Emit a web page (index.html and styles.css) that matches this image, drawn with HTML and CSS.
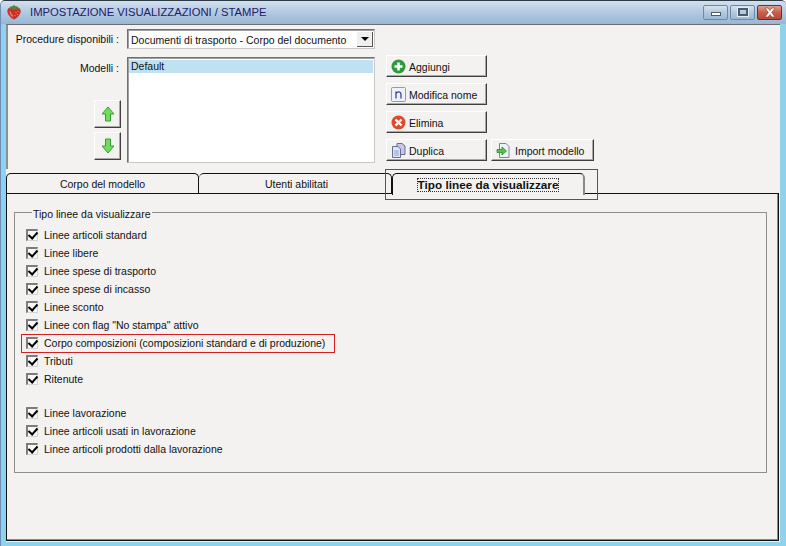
FILE: index.html
```html
<!DOCTYPE html>
<html lang="it">
<head>
<meta charset="utf-8">
<title>Impostazione visualizzazioni / stampe</title>
<link rel="stylesheet" href="styles.css">
</head>
<body>
<div class="window">
  <header class="titlebar">
    <svg class="app-icon" width="16" height="16" viewBox="0 0 16 16"><path d="M8 15.500 Q3 13 1.500 8.500 Q.8 5 3 4 L13 4 Q15.200 5 14.500 8.500 Q13 13 8 15.500 Z" fill="#c9302a"/><path d="M2.500 5 Q4.500 1.500 6 2.500 L8 1 L10 2.500 Q11.500 1.500 13.500 5 L10.500 4.500 L8 6 L5.500 4.500 Z" fill="#5d7f3a"/><path d="M4 7.500 Q4.500 10.500 7 12.500" stroke="#ee8176" stroke-width="1.500" fill="none"/><path d="M10 8 v.8 M12 7 v.8 M9 11 v.8 M11.500 10 v.8" stroke="#f3b43f"/></svg>
    <span class="title">IMPOSTAZIONE VISUALIZZAZIONI / STAMPE</span>
    <div class="caption-buttons">
      <span class="cap cap-min"><i class="glyph-min"></i></span>
      <span class="cap cap-max"><i class="glyph-max"></i></span>
      <span class="cap cap-close"><svg width="16" height="11" viewBox="0 0 16 11"><path d="M3 1 L6 1 L8 3.500 L10 1 L13 1 L9.700 5.500 L13 10 L10 10 L8 7.500 L6 10 L3 10 L6.300 5.500 Z" fill="#fff" stroke="#7c3a30" stroke-width=".6"/></svg></span>
    </div>
  </header>
  <main class="client">
    <section class="top">
      <div class="field-labels">
        <label class="lbl lbl-proc">Procedure disponibili :</label>
        <label class="lbl lbl-mod">Modelli :</label>
        <div class="move-buttons">
          <button class="btn btn-move"><svg width="14" height="16" viewBox="0 0 14 16"><path d="M7 1 L13 8 L9.500 8 L9.500 15 L4.500 15 L4.500 8 L1 8 Z" fill="#6fdc5a" stroke="#3c9a3a"/></svg></button>
          <button class="btn btn-move"><svg width="14" height="16" viewBox="0 0 14 16"><path d="M7 15 L13 8 L9.500 8 L9.500 1 L4.500 1 L4.500 8 L1 8 Z" fill="#6fdc5a" stroke="#3c9a3a"/></svg></button>
        </div>
      </div>
      <div class="fields">
        <div class="select"><span class="select-text">Documenti di trasporto - Corpo del documento</span><span class="select-arrow"></span></div>
        <div class="list"><div class="list-item">Default</div></div>
      </div>
      <div class="actions">
        <button class="btn btn-action"><svg width="15" height="15" viewBox="0 0 15 15"><circle cx="7.500" cy="7.500" r="7" fill="#2d9a3c"/><path d="M7.500 3.500 V11.500 M3.500 7.500 H11.500" stroke="#fff" stroke-width="2.600"/></svg>Aggiungi</button>
        <button class="btn btn-action"><svg width="15" height="15" viewBox="0 0 15 15"><rect x=".5" y=".5" width="14" height="14" rx="1" fill="#eef1fb" stroke="#8d97c9"/><path d="M5 4.500 V11.500 M5 6.500 Q6.500 4.500 8.500 5 Q10 5.500 10 7.500 V11.500" fill="none" stroke="#2a3a80" stroke-width="1.200"/></svg>Modifica nome</button>
        <button class="btn btn-action"><svg width="15" height="15" viewBox="0 0 15 15"><circle cx="7.500" cy="7.500" r="7" fill="#dd4a2c"/><path d="M4.500 4.500 L10.500 10.500 M10.500 4.500 L4.500 10.500" stroke="#fff" stroke-width="2.400"/></svg>Elimina</button>
        <div class="action-row">
          <button class="btn btn-action"><svg width="15" height="15" viewBox="0 0 15 15"><path d="M6 .5 H11 L14 3 V11.500 H6 Z" fill="#c9c6e6" stroke="#6d6a9a"/><path d="M1.500 3.500 H7 L9.500 6 V14.500 H1.500 Z" fill="#dfe6f5" stroke="#5f6f98"/><path d="M3 8 H8 M3 10 H8 M3 12 H8" stroke="#8ea0c6"/></svg>Duplica</button>
          <button class="btn btn-action btn-import"><svg width="15" height="15" viewBox="0 0 15 15"><path d="M3.500 .5 H10 L13 3.500 V14.500 H3.500 Z" fill="#eef2f8" stroke="#7b8799"/><path d="M1 6.500 H6 V4 L10.500 8 L6 12 V9.500 H1 Z" fill="#55c24a" stroke="#2b8a33" stroke-width=".8"/></svg>Import modello</button>
        </div>
      </div>
    </section>
    <nav class="tabs">
      <div class="tab tab-1">Corpo del modello</div>
      <div class="tab tab-2">Utenti abilitati</div>
      <div class="tab tab-3"><span class="focus">Tipo linee da visualizzare</span><span class="mark mark-tab"></span></div>
    </nav>
    <section class="panel">
      <fieldset class="group">
        <legend>Tipo linee da visualizzare</legend>
        <div class="checks">
          <div class="check"><span class="box"></span>Linee articoli standard</div>
          <div class="check"><span class="box"></span>Linee libere</div>
          <div class="check"><span class="box"></span>Linee spese di trasporto</div>
          <div class="check"><span class="box"></span>Linee spese di incasso</div>
          <div class="check"><span class="box"></span>Linee sconto</div>
          <div class="check"><span class="box"></span>Linee con flag "No stampa" attivo</div>
          <div class="check check-marked"><span class="box"></span>Corpo composizioni (composizioni standard e di produzione)<span class="mark mark-row"></span></div>
          <div class="check"><span class="box"></span>Tributi</div>
          <div class="check"><span class="box"></span>Ritenute</div>
          <div class="check check-gap"><span class="box"></span>Linee lavorazione</div>
          <div class="check"><span class="box"></span>Linee articoli usati in lavorazione</div>
          <div class="check"><span class="box"></span>Linee articoli prodotti dalla lavorazione</div>
        </div>
      </fieldset>
    </section>
  </main>
</div>
</body>
</html>
```
FILE: styles.css
```css
* { box-sizing: border-box; }
html, body { margin: 0; padding: 0; }
body { width: 786px; height: 546px; overflow: hidden; font-family: "Liberation Sans", Arial, sans-serif; font-size: 10.5px; color: #111; }

.window { width: 786px; height: 546px; display: flex; flex-direction: column; background: #8ed2ec; border-top: 1px solid #2b3a44; border-left: 1px solid #6d8fb5; border-radius: 5px 5px 0 0; overflow: hidden; }

.titlebar { height: 23px; flex: none; display: flex; align-items: center; padding: 0 4px 1px 5px; background: linear-gradient(#d2e0ee, #b4cbe2 45%, #98b6d4); }
.app-icon { flex: none; margin-right: 8px; }
.title { font-size: 11.25px; color: #241a68; }
.caption-buttons { margin-left: auto; display: flex; gap: 2px; }
.cap { width: 25px; height: 15px; display: flex; align-items: center; justify-content: center; border: 1px solid #6d89a6; border-radius: 2px; background: linear-gradient(#d6e3ee, #b3c9de 50%, #9db9d4); }
.cap-close { border-color: #6c3028; background: linear-gradient(#e0a090, #c8604b 50%, #b84a36); }
.glyph-min { width: 10px; height: 4px; margin-top: 4px; background: #fff; border: 1px solid #4c5c70; }
.glyph-max { width: 10px; height: 8px; border: 2px solid #4c5c70; outline: 1px solid #e4edf5; }

.client { flex: 1; min-height: 0; margin: 0 6px 4px 5px; display: flex; flex-direction: column; background: #f3f2f1; border-top: 1px solid #6e6e6e; }

.top { height: 144px; flex: none; display: flex; border-left: 2px solid #8f8f8f; }
.field-labels { width: 117px; display: flex; flex-direction: column; align-items: flex-end; padding-top: 7px; }
.lbl { display: block; white-space: nowrap; line-height: 14px; padding-right: 6px; }
.lbl-mod { margin-top: 15px; }
.move-buttons { margin-top: 25px; margin-right: 4px; display: flex; flex-direction: column; gap: 4px; }

.fields { width: 248px; margin-left: 2px; padding-top: 4px; display: flex; flex-direction: column; gap: 8px; }
.select { height: 20px; display: flex; align-items: center; justify-content: space-between; background: #fff; border: 1px solid; border-color: #707070 #c8c8c8 #c8c8c8 #707070; box-shadow: inset 1px 1px 0 #a0a0a0; padding: 1px 1px 0 3px; }
.select-text { white-space: nowrap; }
.select-arrow { position: relative; width: 16px; height: 15px; background: #f0efee; border-right: 1px solid #555; border-bottom: 1px solid #555; }
.select-arrow::after { content: ""; position: absolute; left: 4px; top: 5px; border: 4px solid transparent; border-top: 4px solid #000; border-bottom: 0; }
.list { height: 106px; background: #fff; border: 1px solid; border-color: #707070 #c8c8c8 #c8c8c8 #707070; box-shadow: inset 1px 1px 0 #a0a0a0; padding: 2px 1px; }
.list-item { height: 13px; line-height: 12px; padding-left: 2px; background: #bfe1f2; }

.actions { margin-left: 11px; padding-top: 30px; display: flex; flex-direction: column; gap: 6px; }
.action-row { display: flex; gap: 4px; }
.btn { display: flex; align-items: center; font: inherit; color: #111; background: #f3f2f1; padding: 0; margin: 0; border: 1px solid; border-color: #fff #3e3e3e #3e3e3e #fff; box-shadow: inset -1px -1px 0 #a8a8a8; }
.btn-action { width: 101px; height: 22px; padding: 1px 0 0 4px; gap: 3px; white-space: nowrap; }
.btn-import { width: 103px; gap: 4px; }
.btn-move { width: 27px; height: 28px; justify-content: center; }

.tabs { height: 20px; flex: none; margin-top: 4px; display: flex; }
.tab { height: 21px; display: flex; align-items: center; justify-content: center; background: #f3f2f1; border: 1px solid #111; border-width: 1px 1px 0 0; border-radius: 5px 5px 0 0; }
.tab-1 { width: 193px; border-left: 1px solid #111; }
.tab-2 { width: 193px; padding-left: 3px; }
.tab-3 { position: relative; z-index: 1; width: 193px; height: 22px; border-left: 1px solid #111; border-right: 2px solid #8a8a8a; font-size: 11.75px; font-weight: bold; }
.focus { border: 1px dotted #333; padding: 0; line-height: 12px; }
.mark { position: absolute; border: 1px solid #d42020; pointer-events: none; z-index: 3; }
.mark-tab { left: -8px; top: -5px; width: 213px; height: 31px; }

.panel { flex: 1; min-height: 0; margin: 0 1px 1px 0; border: 1px solid #111; padding: 10px 11px 0 7px; box-shadow: inset -1px -1px 0 #8a8a8a; }
.group { margin: 0; height: 269px; border: 1px solid #8e8e8e; padding: 5px 0 0 11px; min-width: 0; }
.group legend { margin-left: 6px; padding: 3px 1px 0; line-height: 14px; }
.checks { display: flex; flex-direction: column; }
.check { position: relative; height: 18px; display: flex; align-items: center; gap: 6px; white-space: nowrap; }
.check-gap { margin-top: 16px; }
.box { position: relative; flex: none; width: 12px; height: 12px; background: #f7f7f7; border: 1px solid; border-width: 2px 1px 1px 2px; border-color: #7c7c7c #d4d4d4 #d4d4d4 #7c7c7c; }
.box::after { content: ""; position: absolute; left: 2px; top: -1px; width: 4px; height: 7px; border: solid #000; border-width: 0 2px 2px 0; transform: rotate(42deg); }
.mark-row { left: -5px; top: 0; width: 314px; height: 19px; }
```
